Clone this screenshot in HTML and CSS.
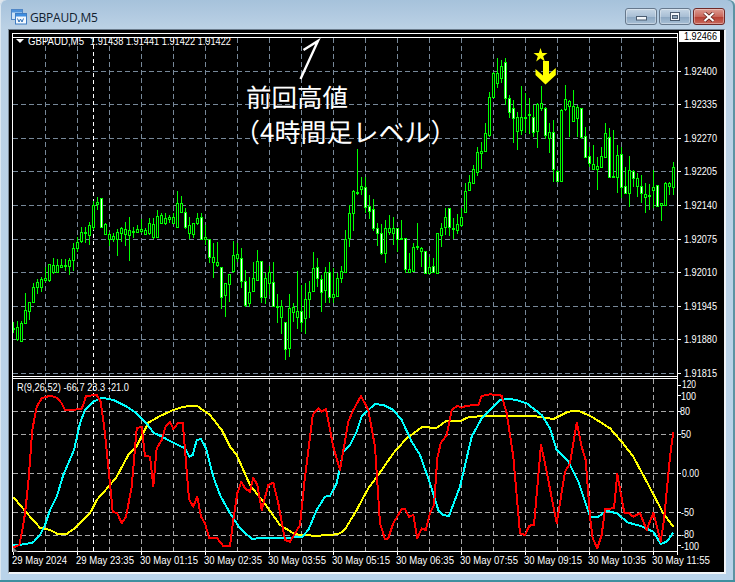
FILE: index.html
```html
<!DOCTYPE html>
<html lang="ja">
<head>
<meta charset="utf-8">
<title>GBPAUD,M5</title>
<link rel="stylesheet" href="styles.css">
</head>
<body>
<div class="window">
  <header class="titlebar">
    <svg class="app-icon" width="16" height="16" viewBox="0 0 16 16" aria-hidden="true">
      <rect x="0.5" y="0.5" width="11" height="10" fill="#cfe4f7" stroke="#4f86c6"/>
      <rect x="1" y="1" width="10" height="2.5" fill="#4f93dc"/>
      <rect x="4.5" y="4.5" width="11" height="10.5" fill="#f4f9fe" stroke="#3f7cc2"/>
      <rect x="5" y="5" width="10" height="2.5" fill="#3f8ee0"/>
      <path d="M6.5 9.5l1.5 3.5 1.5-3 1.5 3 1.5-3.5" fill="none" stroke="#2b6db5"/>
    </svg>
    <span class="title">GBPAUD,M5</span>
    <div class="controls">
      <div class="ctl"><svg width="14" height="8" viewBox="0 0 14 8"><rect x="2.5" y="3.5" width="10" height="3.5" fill="#f2f6fa" stroke="#4b5c70"/></svg></div>
      <div class="ctl"><svg width="14" height="10" viewBox="0 0 14 10"><rect x="2.5" y="0.5" width="9" height="8" fill="#f2f6fa" stroke="#4b5c70"/><rect x="4.5" y="3.5" width="5" height="3" fill="#8fa4b8" stroke="#4b5c70"/></svg></div>
      <div class="ctl ctl-close"><svg width="14" height="10" viewBox="0 0 14 10"><path d="M2.5 1l9 8M11.5 1l-9 8" stroke="#5a1e18" stroke-width="3.6"/><path d="M2.5 1l9 8M11.5 1l-9 8" stroke="#fff" stroke-width="2.2"/></svg></div>
    </div>
  </header>
  <main class="client">
    <svg id="chart" class="chart" width="715" height="542" viewBox="9 30 715 542" shape-rendering="crispEdges"></svg>
  </main>
</div>
<script src="chart.js"></script>
</body>
</html>
```
FILE: styles.css
```css
* { box-sizing: border-box; }
html, body { margin: 0; padding: 0; background: #dfe6ec; }
body { width: 735px; height: 582px; overflow: hidden; }
.window {
  width: 735px;
  height: 582px;
  display: flex;
  flex-direction: column;
  padding: 0 9px 6px 8px;
  background: linear-gradient(180deg, #a6c2db 0, #bbd1e5 28px, #b9d3ea 100%);
  border-bottom: 2px solid #3f8f9f;
  border-radius: 6px 6px 0 0;
  box-shadow: inset 1px 0 0 #dbe7f1, inset -2px 0 0 #5d93a3;
}
.titlebar {
  height: 29px;
  display: flex;
  align-items: flex-start;
  flex: none;
}
.app-icon { margin: 9px 0 0 3px; flex: none; }
.title {
  margin: 10px 0 0 3px;
  font: 12px/15px "Open Sans", "Liberation Sans", sans-serif;
  letter-spacing: -0.2px;
  color: #10202f;
}
.controls {
  margin: 8px 1px 0 auto;
  display: flex;
  gap: 2px;
}
.ctl {
  width: 32px;
  height: 17px;
  display: flex;
  align-items: center;
  justify-content: center;
  border: 1px solid #66788c;
  border-radius: 3px;
  background: linear-gradient(180deg, #c6d6e5 0, #a9bfd5 50%, #8ba6c1 52%, #a8c0d6 100%);
  box-shadow: inset 0 0 0 1px rgba(255,255,255,.35);
}
.ctl-close {
  border-color: #6f2a28;
  background: linear-gradient(180deg, #dd9c92 0, #c9685c 50%, #b53d30 52%, #c9695c 100%);
}
.client {
  width: 718px;
  height: 545px;
  flex: none;
  border-top: 1px solid #6b7c8d;
  border-left: 1px solid #7c8a98;
  border-right: 2px solid #f0f4f8;
  border-bottom: 2px solid #f0f4f8;
  background: #000;
}
.chart { display: block; background: #000; }
.lbl {
  font-family: "Liberation Sans", Arial, sans-serif;
  font-size: 10.5px;
  fill: #fff;
}
.lbl-dark { fill: #000; }
.lbl-tight { font-size: 10px; }
.note {
  font-family: "Noto Sans CJK JP", sans-serif;
  font-weight: 400;
  font-size: 26px;
  fill: #fff;
}
.note-first { font-size: 25.5px; }
.smooth { shape-rendering: geometricPrecision; text-rendering: geometricPrecision; }
```
FILE: chart.js
```js
var NS = 'http://www.w3.org/2000/svg';
var svg = document.getElementById('chart');
function el(name, attrs, parent, txt) {
  var e = document.createElementNS(NS, name);
  for (var k in attrs) e.setAttribute(k, attrs[k]);
  if (txt !== undefined) e.textContent = txt;
  (parent || svg).appendChild(e);
  return e;
}
function line(x1, y1, x2, y2, c, dash) {
  var a = { x1: x1, y1: y1, x2: x2, y2: y2, stroke: c, 'stroke-width': 1 };
  if (dash) a['stroke-dasharray'] = dash;
  return el('line', a);
}
function label(x, y, s, len, cls) {
  var a = { x: x, y: y, 'class': 'lbl' + (cls ? ' ' + cls : '') };
  if (len) { a.textLength = len; a.lengthAdjust = 'spacingAndGlyphs'; }
  return el('text', a, svg, s);
}

var GRID = '#778899', GRID2 = '#a8a8a8', DASH = '5 3';
var xs = [];
for (var x = 45; x <= 653; x += 32) xs.push(x);

// main pane grid
var prices = [[71,'1.92400'],[104,'1.92335'],[138,'1.92270'],[171,'1.92205'],[205,'1.92140'],
  [239,'1.92075'],[272,'1.92010'],[306,'1.91945'],[339,'1.91880'],[373,'1.91815']];
xs.forEach(function (x) { line(x + .5, 38, x + .5, 376, GRID, DASH); });
prices.forEach(function (p) { line(13, p[0] + .5, 677, p[0] + .5, GRID, DASH); });

// indicator grid
var levels = [[385,'120',null,384],[395,'100',null,396],[411,'80',411,411],[434,'50',434,434],[473,'0.00',473,473],
  [512,'-50',512,512],[535,'-80',535,534],[545,'-100',null,546]];
xs.forEach(function (x) { line(x + .5, 379, x + .5, 551, GRID2, DASH); });
levels.forEach(function (l) { if (l[2]) line(13, l[2] + .5, 677, l[2] + .5, GRID2, DASH); });

// day separator
line(93.5, 38, 93.5, 376, '#fff', '4 3');
line(93.5, 379, 93.5, 551, '#fff', '4 3');

// candles: high, body top, body bottom, low, filled
var C = [
[322,328,329,333],[321,327,339,341],[321,323,341,341],[293,310,323,324],[302,302,311,320],[283,287,302,302],
[279,282,287,294],[277,279,287,292],[267,278,280,282],[264,264,280,282],[258,265,272,274],[259,265,272,273],
[259,265,267,267],[259,265,266,271],[258,260,266,275],[243,248,260,271],[237,242,248,252],[227,232,241,243],
[227,232,233,243],[222,225,235,245],[201,205,227,230],[197,202,204,210],[198,198,227,227,1],[223,224,234,235],
[232,234,239,246],[233,236,239,242],[229,232,239,256],[227,228,233,242],[222,229,234,246],[217,230,235,261],
[227,231,232,238],[225,229,232,233],[219,229,231,233],[228,230,234,235],[218,223,233,235],[218,224,237,239],
[210,216,237,237],[213,215,223,224],[213,218,223,225],[215,217,219,223],[213,217,223,224],[191,203,227,227],
[196,203,212,212],[208,212,227,229,1],[217,225,233,239],[223,223,234,238],[213,218,223,225],[213,217,239,239,1],
[225,237,239,245],[239,239,257,263,1],[243,257,262,278],[242,262,265,267],[267,267,297,309,1],[283,283,295,317],
[274,274,284,302],[241,255,271,273],[243,254,258,262],[248,258,281,288,1],[270,281,305,307,1],[277,292,303,307],
[262,278,291,292],[250,261,280,280],[261,261,297,303,1],[273,278,297,304],[266,272,283,295],[262,282,306,307,1],
[294,306,307,323],[300,306,317,334],[322,322,349,360,1],[294,308,348,357],[303,307,312,322],[271,311,317,329],
[285,311,322,332,1],[283,299,318,334],[281,292,299,318],[252,268,291,292],[258,267,278,287,1],[275,279,292,312,1],
[267,272,290,303],[262,272,297,303,1],[268,294,297,303],[273,278,296,297],[266,271,278,283],[230,239,272,273],
[205,213,238,247],[190,191,213,231],[149,192,193,195],[177,186,189,195],[177,187,207,213,1],[195,206,211,219,1],
[199,209,228,231,1],[223,228,233,246,1],[224,233,253,255,1],[220,228,253,263],[215,228,232,235],[217,228,233,245],
[228,228,239,252,1],[220,238,239,239],[238,238,269,273,1],[253,269,272,273],[243,247,271,272],[223,246,247,250],
[247,248,251,267],[251,251,273,273,1],[257,267,273,274],[258,266,272,273,1],[233,233,273,273],[223,228,235,247],
[208,217,227,235],[208,208,227,236,1],[218,228,229,239],[214,224,230,234],[208,217,225,227],[183,191,212,212],
[175,182,190,190],[165,169,183,183],[147,152,172,176],[142,151,153,169],[123,133,151,151],[92,97,135,137],
[72,73,97,98],[58,73,83,88],[60,66,78,83],[58,62,98,105,1],[95,98,112,118,1],[100,108,118,143,1],
[112,117,131,150],[86,117,130,135],[93,117,118,133],[98,114,115,134],[105,117,132,137,1],[103,104,131,148],
[86,103,108,111],[107,108,135,139,1],[123,132,138,153],[120,132,169,182,1],[170,171,181,182,1],[109,110,181,181],
[85,99,109,111],[100,101,106,137],[90,106,121,122],[105,107,118,137],[108,108,137,139,1],[127,136,157,158,1],
[147,156,163,167,1],[145,164,169,170],[157,166,169,190],[147,156,167,168],[123,133,157,158],[128,137,177,178,1],
[130,176,177,177],[145,155,177,193],[147,154,187,198,1],[167,186,193,193,1],[156,170,193,207],[170,171,178,187,1],
[173,178,186,197],[175,186,193,203,1],[183,194,197,213],[184,195,196,210],[170,187,190,208],[185,185,206,207,1],
[203,203,205,221],[182,183,205,206],[182,183,186,195],[162,167,187,195]
];
C.forEach(function (c, k) {
  var x = 13 + 4 * k;
  line(x + .5, c[0], x + .5, c[3], '#00ff00');
  el('rect', { x: x - .5, y: c[1] + .5, width: 2, height: Math.max(c[2] - c[1], 1),
    fill: c[4] ? '#ffffff' : '#000', stroke: '#00ff00', 'stroke-width': 1 });
});

// frame lines
[[12,33,678,33],[12,37,678,37],[12,376,678,376],[12,378,678,378],[12,551,678,551]].forEach(function (l) {
  line(l[0], l[1] + .5, l[2], l[3] + .5, '#fff');
});
line(12.5, 33, 12.5, 551, '#fff');
line(677.5, 33, 677.5, 555, '#fff');

// axis ticks and labels
prices.forEach(function (p) {
  line(678, p[0] + .5, 681, p[0] + .5, '#fff');
  label(684, p[0] + 4, p[1], 33);
});
el('rect', { x: 679, y: 31, width: 41, height: 11, fill: '#fff' });
label(684, 40, '1.92466', 33, 'lbl-dark');
levels.forEach(function (l) {
  line(678, l[0] + .5, 681, l[0] + .5, '#fff');
  var wid = { '120': 14, '100': 15, '80': 10, '50': 10, '0.00': 17, '-50': 13, '-80': 13, '-100': 18 }[l[1]];
  var lx = { '120': 682, '100': 681, '80': 680, '50': 681, '0.00': 682, '-50': 681, '-80': 681, '-100': 681 }[l[1]];
  label(lx, l[3] + 4, l[1], wid, 'lbl-tight');
});
[13,77,141,205,269,333,397,461,525,589,653].forEach(function (x) { line(x + .5, 552, x + .5, 555, '#fff'); });
var times = ['29 May 2024','29 May 23:35','30 May 01:15','30 May 02:35','30 May 03:55','30 May 05:15',
  '30 May 06:35','30 May 07:55','30 May 09:15','30 May 10:35','30 May 11:55'];
times.forEach(function (t, i) { label(i === 0 ? 12 : 12 + 64 * i, 564, t, i === 0 ? 55 : 58); });

// pane captions
el('path', { d: 'M16 39h8l-4 4z', fill: '#fff', 'class': 'smooth' });
label(28, 45, 'GBPAUD,M5', 56);
label(90, 45, '1.91438 1.91441 1.91422 1.91422', 141);
label(17, 391, 'R(9,26,52) -66.7 23.3 -21.0', 112);
el('path', { d: 'M13 547l5 5h-5z', fill: '#808080', 'class': 'smooth' });

// indicator lines
function page(arr, x0, y0) {
  var r = [];
  for (var i = 0; i < arr.length; i += 2) r.push([x0 + arr[i] / 3, y0 + arr[i + 1] / 3]);
  return r;
}
function stitch(a, b, c) {
  var A = page(a, 0, 360), B = page(b, 230, 380), Cc = page(c, 490, 360);
  return A.filter(function (p) { return p[0] < 250; })
    .concat(B.filter(function (p) { return p[0] >= 250 && p[0] < 500; }))
    .concat(Cc.filter(function (p) { return p[0] >= 500; }));
}
var yellow = stitch(
  [40,410,60,435,90,470,120,503,150,510,175,523,200,522,230,500,270,460,290,420,330,375,350,350,385,285,410,258,445,188,480,168,520,150,550,140,590,137,630,165,665,210,690,260,710,285,750,370],
  [0,205,20,230,60,315,100,365,150,435,195,463,250,467,300,466,330,460,345,448,380,390,415,325,445,285,490,220,530,175,575,142,620,143,650,122,695,122,710,113,760,107,810,107],
  [0,168,130,168,190,177,235,155,265,152,305,170,360,205,395,245,430,290,470,365,520,460,550,500]);
var cyan = stitch(
  [40,555,75,553,100,547,120,525,135,495,150,450,170,410,190,345,222,270,240,190,255,150,280,125,305,113,340,120,380,140,410,160,440,190,460,218,480,227,520,248,555,265,568,290,578,285,590,240,603,237,618,265,640,350,660,405,690,460,720,505,750,535],
  [65,476,110,474,215,472,235,450,260,390,285,350,300,348,320,310,340,215,360,195,378,160,395,110,415,90,435,72,460,75,490,90,515,120,545,185,570,225,600,310,625,390,640,405,657,408,690,320,725,170,755,115,810,62],
  [0,150,30,120,55,117,80,120,110,130,155,165,180,205,200,270,235,305,265,365,300,470,325,470,350,452,380,460,415,488,450,497,490,515,512,552,530,545,550,518]);
var red = stitch(
  [40,562,58,555,68,505,75,460,85,370,97,210,110,140,125,115,150,107,170,113,185,130,195,150,243,148,250,135,258,108,290,105,302,125,315,220,330,370,338,455,352,460,365,490,378,470,395,380,410,205,425,200,435,288,450,290,460,378,470,265,485,240,497,198,510,185,520,207,535,188,548,188,555,270,567,418,580,440,592,410,603,470,615,490,627,533,650,533,670,558,690,558,700,480,712,400,724,366,735,385,750,395],
  [60,335,70,293,82,315,95,390,115,315,130,308,145,370,165,480,180,485,210,435,225,290,248,105,265,85,275,95,288,87,310,200,330,270,355,125,370,90,393,48,415,90,435,200,450,430,465,478,475,475,490,430,515,387,525,387,537,410,550,405,562,475,575,445,587,450,600,400,612,375,622,235,632,190,650,165,665,90,682,77,695,83,710,77,745,75,755,48,780,43,810,48],
  [30,106,35,108,50,160,70,290,90,520,105,525,118,497,132,495,153,255,165,310,200,490,225,335,240,310,260,188,275,260,287,300,300,470,308,535,322,565,335,525,345,447,372,445,382,342,403,458,415,458,430,470,450,460,470,510,490,458,512,545,522,480,540,290,550,215]);
function poly(pts, c) {
  el('polyline', { points: pts.map(function (p) { return p[0].toFixed(1) + ',' + p[1].toFixed(1); }).join(' '),
    fill: 'none', stroke: c, 'stroke-width': 2, 'stroke-linejoin': 'round' });
}
poly(yellow, '#ffff00');
poly(cyan, '#00ffff');
poly(red, '#ff0000');

// drawn objects
el('polygon', { points: '540.5,48 542.2,53 547.5,53 543.2,56.2 544.8,61.5 540.5,58.3 536.2,61.5 537.8,56.2 533.5,53 538.8,53',
  fill: '#ffff00', 'class': 'smooth' });
el('polygon', { points: '543,61 549,61 549,74 555.8,68 555.8,75 545.5,84.5 535.5,75 535.5,69 543,75.5',
  fill: '#ffff00', 'class': 'smooth' });
el('polyline', { points: '303.5,50 318,41 300.5,79', fill: 'none', stroke: '#fff', 'stroke-width': 2.4, 'class': 'smooth' });
el('text', { x: 246, y: 107, 'class': 'note note-first smooth' }, svg, '前回高値');
el('text', { x: 234, y: 142, 'class': 'note smooth' }, svg, '（4時間足レベル）');
```
